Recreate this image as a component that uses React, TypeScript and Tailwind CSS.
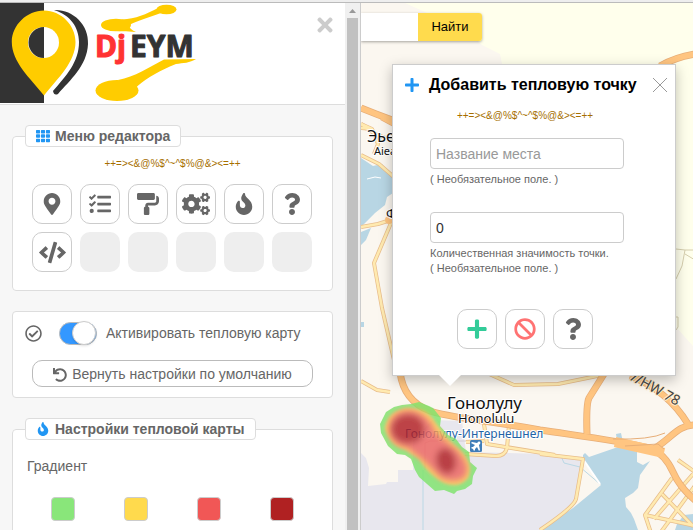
import type { ReactNode } from "react";
import {
  FaBan,
  FaCode,
  FaCogs,
  FaFire,
  FaMapMarkerAlt,
  FaPaintRoller,
  FaPlus,
  FaQuestion,
  FaRegCheckCircle,
  FaTasks,
  FaTh,
  FaTimes,
  FaUndo,
} from "react-icons/fa";

const ORNAMENT = "++=><&@%$^~^$%@&><=++";

function Logo() {
  return (
    <svg width="200" height="101" viewBox="0 3 200 101" role="img" aria-label="DjEYM">
      <rect x="0" y="3" width="44" height="100" fill="#333" />
      <path d="M54 10C72 9 89 24 88 44C87 66 70 80 58 94Q54 96 53 91C66 76 79 62 79 42C79 27 70 15 54 10Z" fill="#333" />
      <path
        d="M44 10.500C61 10.500 75.500 25 75.500 42C75.500 62 58 78 44 95.500C30 78 11.800 62 11.800 42C11.800 25 27 10.500 44 10.500Z"
        fill="#fc0"
      />
      <circle cx="43.500" cy="42.500" r="15.500" fill="#fff" />
      <path d="M44 27A15.500 15.500 0 0 0 44 58Z" fill="#333" />
      <g fill="#fc0">
        <ellipse cx="116" cy="25" rx="15" ry="6.300" />
        <ellipse cx="166.500" cy="9.500" rx="10" ry="4.800" />
        <path d="M122 19.500C136 19 146 14 158 8L161 13C150 17 137 21 129 25Q129 29 136 32C126 31 118 32 112 30Z" />
        <ellipse cx="117" cy="90.500" rx="21.500" ry="10.500" />
        <path d="M118 80C135 77 149 67 164 59.500L196 59C190 63 183 63 176 64C161 70 148 77 137 86.500L136 94Z" />
      </g>
      <g fontFamily="'Noto Sans', 'Open Sans', sans-serif" fontWeight="700" fontSize="30" strokeWidth="1" strokeLinejoin="round">
        <text x="95" y="57" fill="#f33" stroke="#f33">Dj</text>
        <text x="130" y="57" fill="#333" stroke="#333">EYM</text>
      </g>
    </svg>
  );
}

function IconButton({ label, children }: { label: string; children: ReactNode }) {
  return (
    <button
      type="button"
      aria-label={label}
      className="flex size-10 items-center justify-center rounded-[10px] border border-[#ccc] bg-white text-[#666]"
    >
      {children}
    </button>
  );
}

function Legend({ icon, children }: { icon: ReactNode; children: ReactNode }) {
  return (
    <legend className="ml-3 rounded-[4px] border border-[#ddd] bg-white">
      <span className="flex h-5 items-center gap-[5px] px-[10px] text-[14px] font-bold">
        <span className="text-[#2196f3]">{icon}</span>
        {children}
      </span>
    </legend>
  );
}

function Sidebar() {
  const colors = ["bg-[#89e67a]", "bg-[#ffda4d]", "bg-[#f15756]", "bg-[#b02122]"];
  const names = ["Зелёный", "Жёлтый", "Красный", "Тёмно-красный"];
  return (
    <aside className="flex w-[361px] shrink-0 border-r border-[#ccc]">
      <div className="min-w-0 flex-1 overflow-hidden bg-[#f7f7f7] text-[14px] text-[#666]">
        <header className="flex items-start justify-between border-b border-[#ddd] bg-white pr-[9px]">
          <Logo />
          <button type="button" aria-label="Закрыть меню" className="mt-[11px] text-[#ccc]">
            <FaTimes size={22} />
          </button>
        </header>

        <div className="flex flex-col gap-5 px-3 pt-5">
          <fieldset className="rounded-[4px] border border-[#ddd] bg-white pb-[18px]">
            <Legend icon={<FaTh size={14} />}>Меню редактора</Legend>
            <p className="mt-[9px] text-center text-[10px] leading-4 text-[#a66f00]">{ORNAMENT}</p>
            <div className="mt-3 grid grid-cols-[repeat(6,40px)] justify-center gap-2 pr-px">
              <IconButton label="Добавить метку"><FaMapMarkerAlt size={22} /></IconButton>
              <IconButton label="Категории"><FaTasks size={22} /></IconButton>
              <IconButton label="Оформление"><FaPaintRoller size={22} /></IconButton>
              <IconButton label="Настройки"><FaCogs size={28} /></IconButton>
              <IconButton label="Тепловая карта"><FaFire size={22} /></IconButton>
              <IconButton label="Помощь"><FaQuestion size={22} /></IconButton>
              <IconButton label="Код"><FaCode size={27} /></IconButton>
              {[1, 2, 3, 4, 5].map((n) => (
                <span key={n} className="size-10 rounded-[10px] bg-[#eee]" />
              ))}
            </div>
          </fieldset>

          <section className="rounded-[4px] border border-[#ddd] bg-white pt-2 pb-[10px]">
            <label className="flex h-[26px] items-center pl-3">
              <FaRegCheckCircle size={17} />
              <input type="checkbox" defaultChecked className="peer sr-only" />
              <span className="ml-[17px] flex h-[23px] w-[38px] items-center justify-end rounded-full border border-[#bbb] bg-[#3498ff]">
                <span className="size-6 shrink-0 rounded-full border border-[#ccc] bg-white shadow-sm" />
              </span>
              <span className="ml-[9px]">Активировать тепловую карту</span>
            </label>
            <div className="mt-[14px] px-[19px]">
              <button
                type="button"
                className="flex h-[27px] w-full items-center justify-center gap-[5px] rounded-[10px] border border-[#bbb] bg-white pt-[2px]"
              >
                <FaUndo size={14} />
                Вернуть настройки по умолчанию
              </button>
            </div>
          </section>

          <fieldset className="rounded-[4px] border border-[#ddd] bg-white pb-5">
            <Legend icon={<FaFire size={14} />}>Настройки тепловой карты</Legend>
            <p className="mt-4 ml-[14px] leading-5">Градиент</p>
            <div className="mt-[21px] grid grid-cols-4 justify-items-center px-[13px]">
              {colors.map((color, i) => (
                <button
                  key={color}
                  type="button"
                  aria-label={names[i]}
                  className={`size-6 rounded-[4px] border border-[#ccc] ${color}`}
                />
              ))}
            </div>
          </fieldset>
        </div>
      </div>

      <div className="flex w-[15px] flex-col items-center bg-[#f0f0f0]">
        <svg width="15" height="15" viewBox="0 0 15 15" aria-hidden="true">
          <path d="M4 10L7.500 6L11 10Z" fill="#999" />
        </svg>
        <div className="w-[11px] flex-1 bg-[#c1c1c1]" />
      </div>
    </aside>
  );
}

const MAIN_ROADS = [
  "M361 108Q378 115 395 121",
  "M382 117L395 124",
  "M400 372C402 388 409 403 430 411C450 418 480 419 540 430C580 436 615 440 650 448Q665 454 673 472Q680 488 696 501",
  "M650 451C670 441 677 424 696 425",
  "M604 374L589 398Q586 404 587 434",
  "M630 376Q667 390 688 424",
  "M660 66Q676 57 695 54",
];
const MINOR_ROADS = [
  "M361 227L378 224L394 219",
  "M391 223L374 263L382 308L394 360",
  "M361 155L379 164L395 178",
  "M361 124L372 129L378 144L374 154",
  "M361 124L377 135L394 141",
  "M361 128Q370 128 373 133",
  "M361 381L377 390L390 392",
  "M487 373L514 385L558 384L602 375",
  "M540 454L583 459L576 499Q574 507 540 530",
  "M509 425L507 448Q505 456 496 456L465 454",
  "M484 424L487 444L555 455",
  "M466 442L484 441",
  "M672 478L645 515L651 533",
  "M645 515L696 526",
  "M678 460L695 472",
  "M693 474L654 519",
  "M697 483L661 532",
  "M662 494L693 526",
];

const HEAT_OUTLINE =
  "M381 433L380 424L383 418L386 412L394 407L402 405L411 404L419 402L429 406L433 408L437 413L441 418L440 426L448 435L456 439L462 447L469 452L470 462L477 468L473 476L472 484L465 489L457 491L454 494L444 490L435 491L427 484L419 477L415 470L411 459L405 455L397 454L388 446Z";

function MapCanvas() {
  return (
    <svg
      className="absolute inset-0 h-full w-full"
      viewBox="361 3 332 527"
      preserveAspectRatio="xMinYMin slice"
      role="img"
      aria-label="Карта Гонолулу"
    >
      <defs>
        <filter id="soft" x="-30%" y="-30%" width="160%" height="160%">
          <feGaussianBlur stdDeviation="3" />
        </filter>
        <filter id="soft-edge" x="-30%" y="-30%" width="160%" height="160%">
          <feGaussianBlur stdDeviation="1.500" />
        </filter>
      </defs>
      <rect x="361" y="3" width="2000" height="2000" fill="#fbf7f0" />
      <path d="M405 3H2361V1000L693 346L676 327L502 64L500 54L482 45L465 30Z" fill="#ffffec" />
      <path d="M361 158L373 166L382 164L393 178V193L387 197L385 205L375 213L361 227ZM361 232L371 228L366 240L361 245ZM361 322h3v5h-3z" fill="#b8d6e4" />
      <path d="M367 179l8-2 6 1" stroke="#fff" fill="none" />
      <path
        d="M361 453L366 458L369 468L368 486L386 484L387 482L398 482L398 470L413 470V441L432 420L462 421L466 452L545 454L583 459L576 500L540 530H361Z"
        fill="#e8e7ee"
      />
      <path
        d="M583 455L585 453L589 457L618 447L616 434L621 433L624 447L637 452V462L643 465L650 461L640 475L638 488L633 493L625 498L626 507L631 513L634 519L638 530H540L573 508L601 485L583 460ZM693 514L684 515L677 524L675 530H693Z"
        fill="#b8d6e4"
      />
      <path d="M423 470V530M561 456L564 463L580 467L600 484" fill="none" stroke="#bad8e5" />
      <path d="M425 470V443L430 441H470" fill="none" stroke="#d4cbd2" />
      <path d="M583 459L600 484" stroke="#fff" strokeWidth="2" />
      <path d="M676 249L685 250H695M685 250L682 266L676 279M685 254L695 260M676 317h2v10l-2 3" fill="none" stroke="#d6cfae" />
      <g fill="none" strokeLinejoin="round">
        {MINOR_ROADS.map((d) => <path key={d} d={d} stroke="#e8bd8b" strokeWidth="4" />)}
        {MINOR_ROADS.map((d) => <path key={d} d={d} stroke="#ffeab0" strokeWidth="2.500" />)}
        {MAIN_ROADS.map((d) => <path key={d} d={d} stroke="#e7ae78" strokeWidth="7" />)}
        {MAIN_ROADS.map((d) => <path key={d} d={d} stroke="#ffc581" strokeWidth="5.500" />)}
        <path d="M615 442L664 453" stroke="#ffc581" strokeWidth="10" />
        <path d="M613 439Q650 440 665 433M625 446L658 444L664 449" stroke="#e7ae78" />
        <circle cx="389" cy="220" r="4" fill="#ffc581" />
      </g>

      <g
        fontFamily="'Noto Sans', 'Open Sans', sans-serif"
        fill="#111"
        stroke="#fff"
        strokeWidth="2"
        strokeLinejoin="round"
        paintOrder="stroke"
      >
        <text x="367" y="142" fontSize="16">Эьеа</text>
        <text x="374" y="155" fontSize="11">Aiea</text>
        <text x="386" y="218" fontSize="13">Форд</text>
        <text x="447" y="409" fontSize="17">Гонолулу</text>
        <text x="458" y="423" fontSize="13">Honolulu</text>
        <text x="405" y="438" fontSize="12" fill="#2363a5">Гонолулу-Интернешнел</text>
        <text x="630" y="380" fontSize="14" fill="#444" stroke="#ffedcc" transform="rotate(29 630 380)">//HW 78</text>
      </g>

      <g opacity="0.820">
        <path d={HEAT_OUTLINE} fill="#7fe46c" />
        <path
          d="M385 428Q388 411 407 408Q427 408 435 422L447 438L460 450Q474 464 468 478Q459 489 444 483Q429 475 419 459L406 450Q389 445 385 428Z"
          fill="#ffc94c"
          filter="url(#soft-edge)"
        />
        <g filter="url(#soft)">
          <path d="M388 428Q391 410 410 410Q429 413 435 432L457 450Q473 467 464 478Q454 484 441 478L423 460L407 448Q389 445 388 428Z" fill="#ee6560" />
          <ellipse cx="408" cy="429" rx="17" ry="15" fill="#b01c22" />
          <ellipse cx="446" cy="461" rx="10" ry="13" fill="#b01c22" transform="rotate(-14 446 461)" />
        </g>
      </g>

      <rect x="470" y="440" width="12" height="12" rx="1.500" fill="#407db8" />
      <path
        d="M480 442c-1-1-2 0-3 1l-5-1-1 1 4 2-2 2-1 0-1 1 2 1 1 2 1-1 0-1 2-2 2 4 1-1-1-5c1-1 2-2 1-3z"
        fill="#fff"
      />
    </svg>
  );
}

type FieldProps = { id: string; label: string; hints: string[]; placeholder?: string; defaultValue?: string };

function Field({ id, label, hints, placeholder, defaultValue }: FieldProps) {
  return (
    <div>
      <input
        id={id}
        aria-label={label}
        aria-describedby={`${id}-hint`}
        placeholder={placeholder}
        defaultValue={defaultValue}
        className="block h-[31px] w-full rounded-[4px] border border-[#ccc] bg-white px-[5px] text-[14px] text-[#333] placeholder:text-[#999]"
      />
      <div id={`${id}-hint`} className="mt-[3px] text-[11px] leading-[15px] text-[#666]">
        {hints.map((hint) => <p key={hint}>{hint}</p>)}
      </div>
    </div>
  );
}

function HeatPointBalloon() {
  return (
    <div role="dialog" aria-labelledby="balloon-title" className="absolute top-[61px] left-[31px] w-[284px] border border-[#ccc] bg-white shadow-[0_4px_12px_rgba(0,0,0,0.25)]">
      <div className="flex h-10 items-center pr-2 pl-[11px]">
        <FaPlus size={16} className="text-[#2196f3]" />
        <h2 id="balloon-title" className="ml-[9px] flex-1 text-[16px] font-bold whitespace-nowrap text-black">
          Добавить тепловую точку
        </h2>
        <button type="button" aria-label="Закрыть">
          <svg width="14" height="14" viewBox="0 0 14 14">
            <path d="M0 0L14 14M14 0L0 14" stroke="#999" />
          </svg>
        </button>
      </div>
      <p className="mt-[3px] pr-[18px] text-center text-[10px] leading-4 text-[#a66f00]">{ORNAMENT}</p>
      <div className="mt-[14px] ml-[37px] flex w-[194px] flex-col gap-[25px]">
        <Field id="place" label="Название места" placeholder="Название места" hints={["( Необязательное поле. )"]} />
        <Field id="weight" label="Количественная значимость точки" defaultValue="0" hints={["Количественная значимость точки.", "( Необязательное поле. )"]} />
      </div>
      <div className="mt-[33px] mb-[26px] flex gap-2 pl-16">
        <IconButton label="Добавить"><FaPlus size={22} className="text-[#33cc99]" /></IconButton>
        <IconButton label="Отмена"><FaBan size={22} className="text-[#ff7373]" /></IconButton>
        <IconButton label="Помощь"><FaQuestion size={22} /></IconButton>
      </div>
      <svg width="22" height="11" viewBox="0 0 22 11" className="absolute top-full left-[46px]" aria-hidden="true">
        <path d="M0 0H22L11 11Z" fill="#fff" />
      </svg>
    </div>
  );
}

export default function App() {
  return (
    <div className="flex h-screen flex-col overflow-hidden font-['Liberation_Sans',Arial,sans-serif]">
      <div className="h-[3px] shrink-0 border-b border-[#bbb] bg-[#eee]" />
      <div className="flex min-h-0 flex-1">
        <Sidebar />
        <main className="relative min-w-0 flex-1 overflow-hidden">
          <MapCanvas />
          <form className="absolute top-[10px] left-0 flex h-7 rounded-r-[3px] shadow-[0_1px_3px_rgba(0,0,0,0.35)]">
            <input type="search" aria-label="Поиск по карте" className="w-[57px] bg-white px-2 text-[13px]" />
            <button type="button" className="w-16 rounded-r-[3px] bg-[#ffdb4d] text-[13px] text-black">Найти</button>
          </form>
          <HeatPointBalloon />
        </main>
      </div>
    </div>
  );
}
